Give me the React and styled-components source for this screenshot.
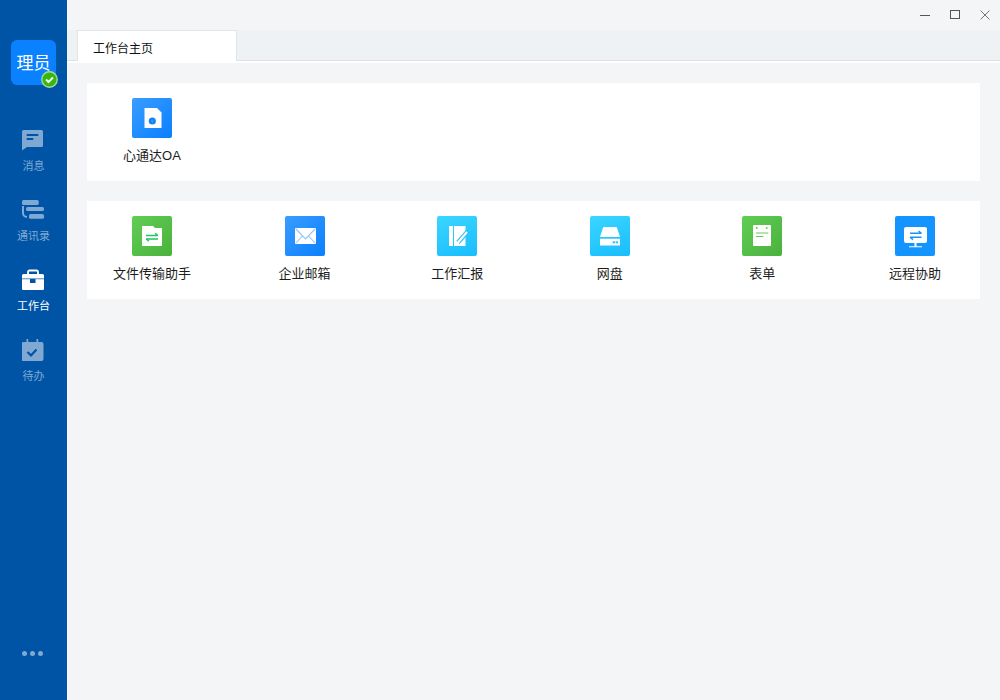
import React from 'react';
import styled, { createGlobalStyle } from 'styled-components';

const Global = createGlobalStyle`
  html, body { margin: 0; padding: 0; height: 100%; }
  body { font-family: "Liberation Sans", "Noto Sans CJK SC", sans-serif; background: #f4f5f7; }
`;

const Shell = styled.div`display: flex; width: 1000px; height: 700px; overflow: hidden; background: #f4f5f7;`;
const Sidebar = styled.aside`
  width: 67px; flex: none; background: #0054a6; display: flex; flex-direction: column;
  align-items: center; padding: 40px 0 44px; box-sizing: border-box;
`;
const Avatar = styled.div`
  position: relative; width: 45px; height: 45px; border-radius: 6px; background: #0a82ff; color: #fff;
  font-size: 17px; line-height: 47px; text-align: center; margin-bottom: 40px; flex: none;
`;
const Badge = styled.span`
  position: absolute; right: -2px; bottom: -3px; width: 17px; height: 17px; display: flex;
`;
const Nav = styled.nav`display: flex; flex-direction: column; width: 100%;`;
const NavItem = styled.div`
  height: 70px; display: flex; flex-direction: column; align-items: center; padding-top: 4px; box-sizing: border-box;
  color: ${p => (p.$active ? '#ffffff' : '#7fa9d3')}; font-size: 11px; line-height: 16px;
  svg { display: block; width: 22px; height: 22px; margin: 0 1px 7px 0; }
`;
const Dots = styled.div`margin: auto 2px 0 0; display: flex; gap: 3px;`;
const Dot = styled.i`width: 5px; height: 5px; border-radius: 50%; background: #7fa9d3;`;

const Main = styled.main`flex: 1; display: flex; flex-direction: column; min-width: 0;`;
const TitleBar = styled.header`height: 30px; flex: none; display: flex; justify-content: flex-end; align-items: center; padding-right: 5px; gap: 10px;`;
const WinBtn = styled.span`width: 20px; height: 30px; display: flex; align-items: center; justify-content: center;`;
const TabStrip = styled.div`
  height: 33px; flex: none; box-sizing: border-box; background: linear-gradient(#eff2f5 0 30px, #dfe1e4 30px 31px, #fff 31px);
  padding-left: 10px; display: flex;
`;
const Tab = styled.div`
  width: 160px; height: 31px; box-sizing: border-box; background: #fff; border: 1px solid #e2e4e7; border-bottom: 0;
  font-size: 12px; line-height: 37px; color: #111; padding-left: 15px; overflow: hidden;
`;
const Content = styled.div`padding: 20px 20px 0; display: flex; flex-direction: column; gap: 20px;`;
const Card = styled.section`
  background: #fff; height: 98px; box-sizing: border-box; padding-top: 15px; display: flex; justify-content: space-between;
`;
const AppItem = styled.div`width: 130px; display: flex; flex-direction: column; align-items: center;`;
const Tile = styled.div`
  width: 40px; height: 40px; border-radius: 2px; background: ${p => p.$bg};
  display: flex; align-items: center; justify-content: center;
  svg { display: block; width: 40px; height: 40px; }
`;
const Label = styled.div`margin-top: 8px; font-size: 13px; line-height: 19px; color: #1c1c1c; white-space: nowrap;`;

const blue = 'linear-gradient(135deg,#3a9dff,#0a7fff)';
const green = 'linear-gradient(135deg,#62cd55,#48b23d)';
const cyan = 'linear-gradient(160deg,#3bd6ff,#19bdff)';

const Icons = {
  oa: <svg viewBox="0 0 40 40"><path d="M12.500 10h12.500l4.500 4.500V30H12.500z" fill="#fff"/><circle cx="20.300" cy="23" r="3.600" fill="#1581f5"/><path d="M18.800 21.800l1.500 1.200 1.500-1.200M20.300 23v2" stroke="#5aa8f8" strokeWidth=".6" fill="none"/></svg>,
  file: <svg viewBox="0 0 40 40"><path d="M10 10h11l2 2h7v18H10z" fill="#fff"/><path d="M14 19.500h12M23 17.300l3 2.200M14 23h12M17 25.200L14 23" stroke="#22c463" strokeWidth="1.300" fill="none"/></svg>,
  mail: <svg viewBox="0 0 40 40"><rect x="10" y="12" width="21" height="16" rx="1" fill="#fff"/><path d="M11 13l9.500 10 9.500-10M11 27l6.500-7M30 27l-6.500-7" stroke="#8cc5fd" strokeWidth="1.100" fill="none"/></svg>,
  report: <svg viewBox="0 0 40 40"><path d="M12 10h4v20h-4zM17 10h11.500v20H17z" fill="#fff"/><path d="M21 26.500L31 15" stroke="#28c2ff" strokeWidth="4.400"/><path d="M21 26.500L30 16" stroke="#fff" strokeWidth="2"/><path d="M20 27.500l1-3 2 1.800z" fill="#fff"/></svg>,
  disk: <svg viewBox="0 0 40 40"><path d="M14 11h12a1 1 0 0 1 1 .7L30 21H10l3-9.300a1 1 0 0 1 1-.7z" fill="#fff"/><path d="M10 22.700h20V29a.5.500 0 0 1-.5.500h-19a.5.500 0 0 1-.5-.500z" fill="#fff"/><rect x="22.700" y="25.300" width="2.300" height="2" fill="#28c2ff"/><rect x="25.700" y="25.300" width="2.300" height="2" fill="#28c2ff"/></svg>,
  form: <svg viewBox="0 0 40 40"><rect x="11" y="9" width="18" height="21" rx="1" fill="#fff"/><circle cx="14.700" cy="12" r="1" fill="#62cd55"/><circle cx="24.700" cy="12" r="1" fill="#62cd55"/><path d="M14 17h12.300M14 20.500h7.300" stroke="#62cd55" strokeWidth="1.200"/></svg>,
  remote: <svg viewBox="0 0 40 40"><rect x="9" y="11" width="23" height="16" rx="2" fill="#fff"/><path d="M19.500 27h2v3.300h-2zM14 30.200h13v1H14z" fill="#fff"/><path d="M15 17.300h11.500M23.500 15l3 2.300M15 21.300h11.500M18 23.600L15 21.300" stroke="#1394ff" strokeWidth="1.400" fill="none"/></svg>,
};

const items = [
  ['文件传输助手', green, Icons.file],
  ['企业邮箱', blue, Icons.mail],
  ['工作汇报', cyan, Icons.report],
  ['网盘', cyan, Icons.disk],
  ['表单', green, Icons.form],
  ['远程协助', '#1394ff', Icons.remote],
];

const navBlue = '#0054a6';
const nav = [
  ['消息', false, <svg viewBox="0 0 22 22"><path d="M0 2.500A1.500 1.500 0 0 1 1.500 1h18A1.500 1.500 0 0 1 21 2.500v14a1.500 1.500 0 0 1-1.500 1.500H5L0 21.500z" fill="currentColor"/><path d="M4.700 5h11.600v2H4.700zM4.700 9h6.600v2H4.700z" fill={navBlue}/></svg>],
  ['通讯录', false, <svg viewBox="0 0 22 22"><rect x="0" y="1" width="16.700" height="5" rx="1.500" fill="currentColor"/><rect x="4" y="8" width="18" height="4" rx="1.500" fill="currentColor"/><rect x="7" y="15" width="15" height="4.700" rx="1.500" fill="currentColor"/><path d="M1 7v7a4 4 0 0 0 4 4" stroke="currentColor" strokeWidth="2" fill="none"/></svg>],
  ['工作台', true, <svg viewBox="0 0 22 22"><path d="M6 6V3a1.500 1.500 0 0 1 1.500-1.500h7A1.500 1.500 0 0 1 16 3v3" stroke="currentColor" strokeWidth="1.800" fill="none"/><path d="M0 6.500A1.500 1.500 0 0 1 1.500 5h19A1.500 1.500 0 0 1 22 6.500V20a1 1 0 0 1-1 1H1a1 1 0 0 1-1-1z" fill="currentColor"/><path d="M0 9.500h22v.7H0z" fill={navBlue}/><rect x="8" y="10" width="5.500" height="4" fill={navBlue}/></svg>],
  ['待办', false, <svg viewBox="0 0 22 22"><rect x="-.5" y="3" width="22" height="19" rx="2" fill="currentColor"/><path d="M4.500 0h1.700v4H4.500zM14.500 0h1.700v4h-1.700z" fill="currentColor"/><path d="M5.500 13l3.500 3.500 5.500-6" stroke={navBlue} strokeWidth="2.200" fill="none"/></svg>],
];

export default function App() {
  return (
    <Shell>
      <Global />
      <Sidebar>
        <Avatar>
          理员
          <Badge>
            <svg viewBox="0 0 17 17" width="17" height="17"><circle cx="8.500" cy="8.500" r="7.700" fill="#35b80c" stroke="#a9d6a0" strokeWidth="1.400"/><path d="M5 8.500l2.500 2.500L12 6.500" stroke="#fff" strokeWidth="2" fill="none"/></svg>
          </Badge>
        </Avatar>
        <Nav>
          {nav.map(([t, a, ic]) => <NavItem key={t} $active={a}>{ic}{t}</NavItem>)}
        </Nav>
        <Dots><Dot /><Dot /><Dot /></Dots>
      </Sidebar>
      <Main>
        <TitleBar>
          <WinBtn><svg width="10" height="10" viewBox="0 0 10 10"><path d="M0 5.500h10" stroke="#555" /></svg></WinBtn>
          <WinBtn><svg width="10" height="10" viewBox="0 0 10 10"><rect x=".5" y=".5" width="9" height="8" fill="none" stroke="#555" /></svg></WinBtn>
          <WinBtn><svg width="10" height="10" viewBox="0 0 10 10"><path d="M.5.500l9 9M9.500.500l-9 9" stroke="#555" strokeWidth=".8" /></svg></WinBtn>
        </TitleBar>
        <TabStrip><Tab>工作台主页</Tab></TabStrip>
        <Content>
          <Card>
            <AppItem><Tile $bg={blue}>{Icons.oa}</Tile><Label>心通达OA</Label></AppItem>
          </Card>
          <Card>
            {items.map(([t, bg, ic]) => <AppItem key={t}><Tile $bg={bg}>{ic}</Tile><Label>{t}</Label></AppItem>)}
          </Card>
        </Content>
      </Main>
    </Shell>
  );
}
